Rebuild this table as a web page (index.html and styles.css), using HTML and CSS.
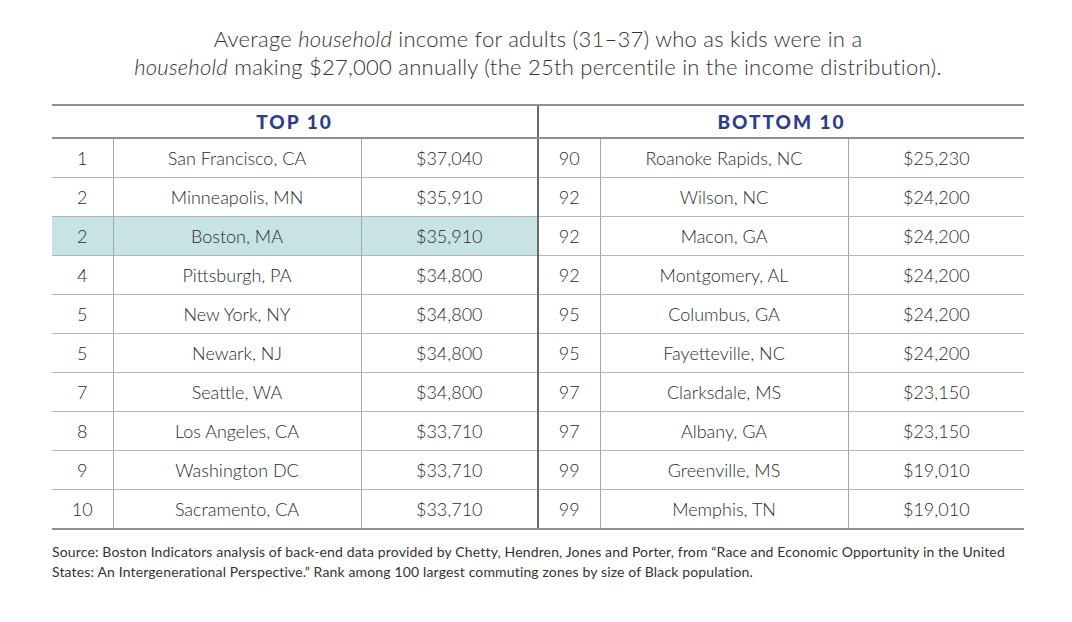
FILE: index.html
```html
<!DOCTYPE html>
<html>
<head>
<meta charset="utf-8">
<link rel="stylesheet" href="styles.css">
</head>
<body>
<div class="page">
  <h1 class="title">Average <em>household</em> income for adults (31–37) who as kids were in a<br><em>household</em> making $27,000 annually (the 25th percentile in the income distribution).</h1>
  <table class="tbl">
    <colgroup>
      <col class="c-rank"><col class="c-city"><col class="c-amt">
      <col class="c-rank2"><col class="c-city"><col class="c-amt2">
    </colgroup>
    <thead>
      <tr><th colspan="3" class="half">TOP 10</th><th colspan="3" class="half right">BOTTOM 10</th></tr>
    </thead>
    <tbody>
      <tr><td>1</td><td>San Francisco, CA</td><td>$37,040</td><td class="split">90</td><td>Roanoke Rapids, NC</td><td>$25,230</td></tr>
      <tr><td>2</td><td>Minneapolis, MN</td><td>$35,910</td><td class="split">92</td><td>Wilson, NC</td><td>$24,200</td></tr>
      <tr><td class="hl">2</td><td class="hl">Boston, MA</td><td class="hl">$35,910</td><td class="split">92</td><td>Macon, GA</td><td>$24,200</td></tr>
      <tr><td>4</td><td>Pittsburgh, PA</td><td>$34,800</td><td class="split">92</td><td>Montgomery, AL</td><td>$24,200</td></tr>
      <tr><td>5</td><td>New York, NY</td><td>$34,800</td><td class="split">95</td><td>Columbus, GA</td><td>$24,200</td></tr>
      <tr><td>5</td><td>Newark, NJ</td><td>$34,800</td><td class="split">95</td><td>Fayetteville, NC</td><td>$24,200</td></tr>
      <tr><td>7</td><td>Seattle, WA</td><td>$34,800</td><td class="split">97</td><td>Clarksdale, MS</td><td>$23,150</td></tr>
      <tr><td>8</td><td>Los Angeles, CA</td><td>$33,710</td><td class="split">97</td><td>Albany, GA</td><td>$23,150</td></tr>
      <tr><td>9</td><td>Washington DC</td><td>$33,710</td><td class="split">99</td><td>Greenville, MS</td><td>$19,010</td></tr>
      <tr><td>10</td><td>Sacramento, CA</td><td>$33,710</td><td class="split">99</td><td>Memphis, TN</td><td>$19,010</td></tr>
    </tbody>
  </table>
  <p class="source">Source: Boston Indicators analysis of back-end data provided by Chetty, Hendren, Jones and Porter, from “Race and Economic Opportunity in the United States: An Intergenerational Perspective.” Rank among 100 largest commuting zones by size of Black population.</p>
</div>
</body>
</html>
```

FILE: styles.css
```css
html, body {
  margin: 0;
  padding: 0;
  background: #ffffff;
}
.page {
  width: 972px;
  padding: 25px 0 0 52px;
  font-family: Lato, "Open Sans", sans-serif;
  color: #333333;
}
.title {
  margin: 0;
  font-weight: 300;
  font-size: 22px;
  line-height: 28px;
  text-align: center;
  color: #333333;
  letter-spacing: 0.25px;
}
.title em {
  font-style: italic;
}
.tbl {
  margin-top: 23px;
  width: 972px;
  border-collapse: collapse;
  table-layout: fixed;
  font-size: 18px;
  font-weight: 300;
  color: #2b2b2b;
}
.c-rank { width: 61px; }
.c-city { width: 248px; }
.c-amt { width: 177px; }
.c-rank2 { width: 62px; }
.c-amt2 { width: 176px; }
.tbl thead th {
  height: 31px;
  padding: 0;
  border-top: 2px solid #8f8f8f;
  border-bottom: 2px solid #8f8f8f;
  color: #2d3d8c;
  font-size: 19px;
  font-weight: 900;
  letter-spacing: 2px;
  text-align: center;
}
.tbl thead th.right {
  border-left: 2px solid #6a6a6a;
}
.tbl tbody td {
  height: 38px;
  padding: 0;
  text-align: center;
  border-bottom: 1px solid #b5b5b5;
  border-left: 1px solid #a8a8a8;
}
.tbl tbody td:first-child {
  border-left: none;
}
.tbl tbody td.split {
  border-left: 2px solid #6a6a6a;
}
.tbl tbody tr:last-child td {
  border-bottom: 2px solid #8f8f8f;
}
.tbl tbody td.hl {
  background: #c8e3e3;
}
.source {
  margin: 12px 0 0 0;
  font-size: 14px;
  line-height: 20px;
  letter-spacing: 0.15px;
  color: #333333;
}
```
